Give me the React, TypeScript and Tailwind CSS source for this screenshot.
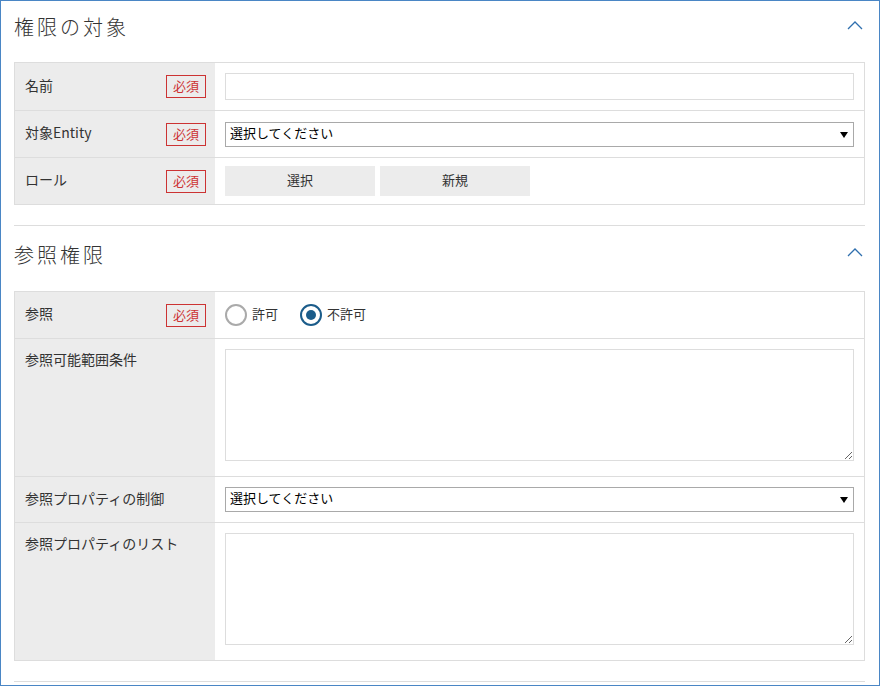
import React from 'react';

const FONT = { fontFamily: '"Noto Sans CJK JP", "Noto Sans", sans-serif' };

function Chevron() {
  return (
    <svg width="16" height="10" viewBox="0 0 16 10" className="shrink-0">
      <path d="M1 9 L8 2 L15 9" fill="none" stroke="#2f6fae" strokeWidth="1.3" />
    </svg>
  );
}

function Required() {
  return (
    <span className="w-[40px] h-[23px] border border-[#cc3333] text-[#cc3333] text-[13px] leading-[19px] text-center shrink-0">
      必須
    </span>
  );
}

function Label({ text, required, top }: { text: string; required?: boolean; top?: boolean }) {
  return (
    <div
      className={`w-[200px] shrink-0 bg-[#ececec] pl-[10px] pr-[9px] flex justify-between ${
        top ? 'items-start pt-[10px]' : 'items-center'
      }`}
    >
      <span className={`text-[14px] leading-[20px] text-[#333] ${top ? '' : 'pb-[4px]'}`}>{text}</span>
      {required && <Required />}
    </div>
  );
}

function Select() {
  return (
    <div className="relative w-[629px] h-[25px] border border-[#a9a9a9] bg-white flex items-center pl-[4px]">
      <span className="text-[13px] text-black leading-[20px] pb-[3px]">選択してください</span>
      <svg width="8" height="6" viewBox="0 0 8 6" className="absolute right-[5px] top-[9px]">
        <path d="M0 0 H8 L4 6 Z" fill="#000" />
      </svg>
    </div>
  );
}

function Radio({ checked, label }: { checked?: boolean; label: string }) {
  return (
    <label className="flex items-center gap-[5px]">
      <span
        className={`w-[22px] h-[22px] rounded-full border-2 flex items-center justify-center bg-white ${
          checked ? 'border-[#1b5c8a]' : 'border-[#aaaaaa]'
        }`}
      >
        {checked && <span className="w-[10px] h-[10px] rounded-full bg-[#1b5c8a]" />}
      </span>
      <span className="text-[13px] text-[#333] leading-[20px] pb-[3px]">{label}</span>
    </label>
  );
}

export default function App() {
  return (
    <div className="w-[880px] h-[686px] border border-[#4a86c5] bg-white overflow-hidden" style={FONT}>
      <div className="pl-[13px] pr-[14px]">
        {/* 権限の対象 */}
        <div className="h-[61px] flex items-start justify-between">
          <h2 className="mt-[13px] text-[20px] leading-[26px] tracking-[3px] text-[#333] font-light">権限の対象</h2>
          <div className="mt-[19px] mr-[2px]">
            <Chevron />
          </div>
        </div>

        <div className="border border-[#dddddd]">
          <div className="flex h-[47px]">
            <Label text="名前" required />
            <div className="flex-1 flex items-center pl-[10px] pr-[9px]">
              <input className="w-[629px] h-[27px] border border-[#dddddd] outline-none" />
            </div>
          </div>
          <div className="flex h-[47px] border-t border-[#dddddd]">
            <Label text="対象Entity" required />
            <div className="flex-1 flex items-center pl-[10px]">
              <Select />
            </div>
          </div>
          <div className="flex h-[47px] border-t border-[#dddddd]">
            <Label text="ロール" required />
            <div className="flex-1 flex items-center gap-[5px] pl-[10px]">
              <button className="w-[150px] h-[30px] bg-[#ececec] text-[13px] text-[#333] pb-[3px]">選択</button>
              <button className="w-[150px] h-[30px] bg-[#ececec] text-[13px] text-[#333] pb-[3px]">新規</button>
            </div>
          </div>
        </div>

        <div className="mt-[20px] border-t border-[#dddddd]" />

        {/* 参照権限 */}
        <div className="h-[65px] flex items-start justify-between">
          <h2 className="mt-[16px] text-[20px] leading-[26px] tracking-[3px] text-[#333] font-light">参照権限</h2>
          <div className="mt-[21px] mr-[2px]">
            <Chevron />
          </div>
        </div>

        <div className="border border-[#dddddd]">
          <div className="flex h-[46px]">
            <Label text="参照" required />
            <div className="flex-1 flex items-center gap-[22px] pl-[10px]">
              <Radio label="許可" />
              <Radio label="不許可" checked />
            </div>
          </div>
          <div className="flex h-[138px] border-t border-[#dddddd]">
            <Label text="参照可能範囲条件" top />
            <div className="flex-1 pl-[10px] pt-[10px]">
              <textarea className="block w-[629px] h-[112px] border border-[#dddddd] outline-none" />
            </div>
          </div>
          <div className="flex h-[46px] border-t border-[#dddddd]">
            <Label text="参照プロパティの制御" />
            <div className="flex-1 flex items-center pl-[10px]">
              <Select />
            </div>
          </div>
          <div className="flex h-[138px] border-t border-[#dddddd]">
            <Label text="参照プロパティのリスト" top />
            <div className="flex-1 pl-[10px] pt-[10px]">
              <textarea className="block w-[629px] h-[112px] border border-[#dddddd] outline-none" />
            </div>
          </div>
        </div>

        <div className="mt-[20px] border-t border-[#dddddd]" />
      </div>
    </div>
  );
}
